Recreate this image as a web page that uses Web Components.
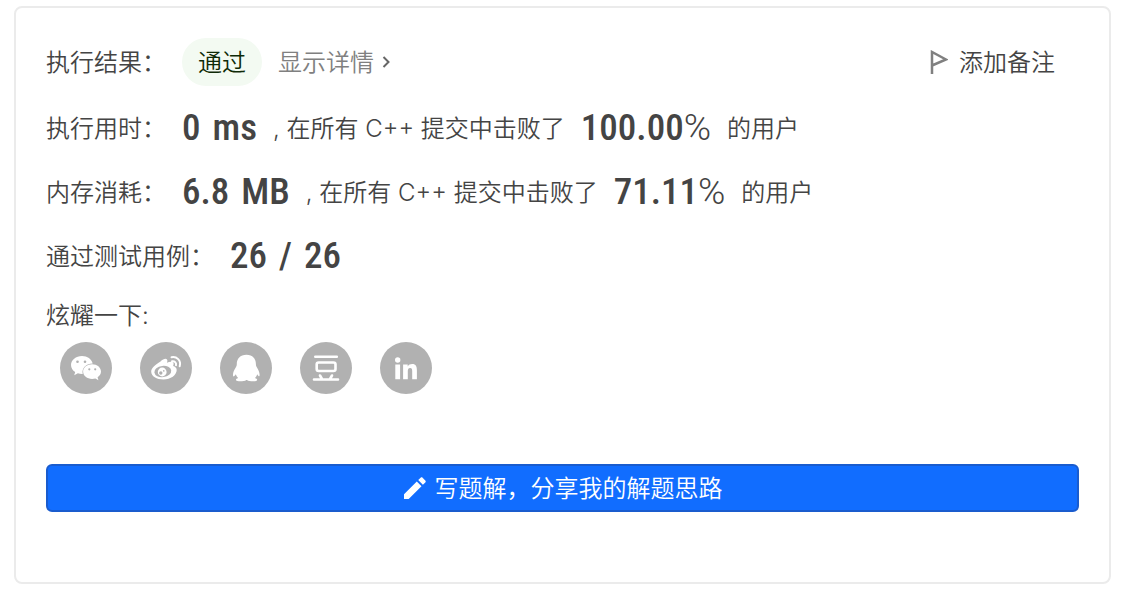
<!DOCTYPE html>
<html lang="zh-CN">
<head>
<meta charset="utf-8">
<meta name="viewport" content="width=device-width, initial-scale=1">
<title>执行结果</title>
<style>
  body {
    margin: 0;
    padding: 6px 13px 12px 14px;
    background: #fff;
    color: #444;
    font: 24px/32px Inter, "Noto Sans CJK SC", sans-serif;
    font-weight: 350;
  }
</style>
</head>
<body>
<submission-result></submission-result>

<template id="result-card">
  <style>
    :host { display: block; border: 2px solid #ebebeb; border-radius: 8px; padding: 24px 30px 70px; background: #fff; }
    .rows { display: flex; flex-direction: column; }
    footer { margin-top: 70px; }
    .first { min-height: 60px; padding-bottom: 4px; }
    .pass { padding: 9px 16px 7px; border-radius: 24px; background: #f3faf2; color: #0f2a06; }
    a { color: #808080; text-decoration: none; display: inline-flex; align-items: center; gap: 8px; }
    a span, .note span { padding-top: 2px; }
    .note { margin-left: auto; margin-right: 24px; padding: 0; border: 0; background: none; font: inherit; color: inherit; display: flex; align-items: center; gap: 11px; cursor: pointer; }
    .share { line-height: 28px; margin-top: 14px; }
    nav { display: flex; gap: 28px; padding: 12px 14px 0; }
  </style>
  <div class="rows">
    <result-row class="first" label="执行结果："><span class="pass">通过</span><a href="#detail"><span>显示详情</span><svg width="9" height="14" viewBox="0 0 9 14" fill="none" stroke="#666" stroke-width="2"><path d="M1.500 2l5 5-5 5"/></svg></a><button class="note" type="button"><svg width="18" height="24" viewBox="0 0 18 24" fill="none" stroke="#808080" stroke-width="2.500"><path d="M2 24V2L16 9.500 2 15.500"/></svg><span>添加备注</span></button></result-row>
    <result-row label="执行用时："><big-value><b>0</b> <b>ms</b></big-value><span>, 在所有 C++ 提交中击败了</span><big-value unit="%">100.00</big-value><span>的用户</span></result-row>
    <result-row label="内存消耗："><big-value><b>6.8</b> <b>MB</b></big-value><span>, 在所有 C++ 提交中击败了</span><big-value unit="%">71.11</big-value><span>的用户</span></result-row>
    <result-row label="通过测试用例："><big-value><b>26</b> <b>/</b> <b>26</b></big-value></result-row>
  </div>
  <div class="share">炫耀一下:</div>
  <nav aria-label="分享">
    <share-link label="微信"><svg viewBox="0 0 52 52"><path fill="#fff" d="M22 14c-6.100 0-11 4-11 9 0 2.900 1.600 5.400 4.200 7l-1 3.300 3.700-2c1.300.5 2.700.7 4.100.7h.7c-1.200-6 3.800-10.500 10-10.400C31.800 17 27.200 14 22 14z"/><path fill="#fff" d="M41 29.600c0-4.100-3.900-7.300-8.900-7.300s-9 3.200-9 7.300 4 7.400 9 7.400c1.200 0 2.300-.2 3.300-.5l3 1.700-.8-2.900c2.100-1.300 3.400-3.400 3.400-5.700z"/><g fill="#b1b1b1"><circle cx="17.500" cy="19.700" r="1.300"/><circle cx="25" cy="19.700" r="1.300"/><circle cx="29.300" cy="27.300" r="1.100"/><circle cx="35.200" cy="27.300" r="1.100"/></g></svg></share-link>
    <share-link label="微博"><svg viewBox="0 0 52 52"><path fill="#fff" d="M20.500 19.500c2.500-2.500 5.500-3.500 6.500-2 .7 1 .4 2-.1 3.200 2.700-1 6.600-1.600 6.700 1 0 .8-.3 1.500-.5 2.200 2 .6 3.600 1.800 3.600 4.100 0 5-6 9.500-13.300 9.500-6.700 0-12.200-3.200-12.200-8 0-3.200 4-7 9.300-10z"/><ellipse cx="22.800" cy="29.500" rx="8.500" ry="5.600" transform="rotate(-7 22.800 29.500)" fill="#b1b1b1"/><circle cx="22.200" cy="30" r="4.400" fill="#fff"/><circle cx="20.800" cy="31" r="1.700" fill="#b1b1b1"/><circle cx="23.800" cy="28.900" r=".8" fill="#b1b1b1"/><path fill="none" stroke="#fff" stroke-width="2" stroke-linecap="round" d="M31.500 15.200c5-1.200 10 3.400 8.200 9M32 19.300c2.500-.5 4.600 1.400 4 4"/></svg></share-link>
    <share-link label="QQ"><svg viewBox="0 0 52 52"><path fill="#fff" d="M26.500 12.800c-6.400 0-9.700 4.200-9.700 9.200 0 1.600-.4 2.300-1.200 3.700-1.500 2.500-2.600 4.700-2.600 7 0 2.200.9 2.500 2.800-.4.400 1.500 1.200 2.700 2.300 3.700-1.700.6-2.500 1.400-2 2.300.9 1.500 8 1.400 10.200-.4h.7c2.200 1.800 9.100 1.900 10 .4.500-.9-.2-1.700-2-2.300 1.100-1 1.900-2.200 2.300-3.700 1.500 2.600 2.300 2.600 2.300.4 0-2.300-1.100-4.500-2.500-7-.8-1.400-1.200-2.100-1.200-3.700 0-5-3.200-9.200-9.400-9.200z"/></svg></share-link>
    <share-link label="豆瓣"><svg viewBox="0 0 52 52"><g fill="none" stroke="#fff" stroke-width="2.600" stroke-linecap="round"><path d="M15.300 14.700h21.500M14 37.500h24M20 33.500l2 3.500M32 33.500l-2 3.500"/><rect x="16.700" y="20.500" width="18.800" height="8.500" rx="2"/></g></svg></share-link>
    <share-link label="领英"><svg viewBox="0 0 52 52"><g fill="#fff"><circle cx="17.700" cy="18" r="2.700"/><path d="M15.300 22.500h4.800v14.700h-4.800zM23.100 22.500h4.600v2c1-1.600 2.600-2.400 4.500-2.400 3.800 0 4.700 2.500 4.700 6.300v8.800h-4.700v-8c0-2-.2-3.300-2.100-3.300s-2.300 1.500-2.300 3.300v8h-4.700z"/></g></svg></share-link>
  </nav>
  <footer><write-button>写题解，分享我的解题思路</write-button></footer>
</template>

<template id="result-row">
  <style>
    :host { display: flex; align-items: center; min-height: 64px; gap: 16px; }
    .label, ::slotted(span) { padding-top: 2px; white-space: nowrap; }
  </style>
  <span class="label"></span><slot></slot>
</template>

<template id="big-value">
  <style>
    :host { display: flex; align-items: baseline; gap: 12px; font: 500 37px/40px "Roboto Condensed", Roboto, sans-serif; white-space: nowrap; }
    :host([unit]) { gap: 0; }
    ::slotted(b) { font-weight: inherit; }
    .unit { font-family: Roboto, sans-serif; font-weight: 300; }
    .unit:empty { display: none; }
  </style>
  <slot></slot><span class="unit"></span>
</template>

<template id="share-link">
  <style>
    :host { display: block; }
    a { display: block; width: 52px; height: 52px; border-radius: 50%; background: #b1b1b1; }
  </style>
  <a href="#share"><slot></slot></a>
</template>

<template id="write-button">
  <style>
    :host { display: block; }
    button { box-sizing: border-box; width: 100%; height: 48px; display: flex; align-items: center; justify-content: center; gap: 8px; border: 2px solid #1a5cce; border-radius: 6px; background: #116dff; color: #fff; font: inherit; cursor: pointer; padding: 0; }
    span { padding-top: 2px; }
  </style>
  <button type="button"><svg width="24" height="24" viewBox="0 0 24 24" fill="#fff"><path d="M1 18.300V23h4.700L18.500 10.200l-4.700-4.700zM22.300 6.400c.6-.6.600-1.400 0-2l-2.700-2.700c-.6-.6-1.400-.6-2 0l-2.400 2.400 4.700 4.700z"/></svg><span><slot></slot></span></button>
</template>

<script>
  class TemplateElement extends HTMLElement {
    constructor() {
      super();
      this.attachShadow({ mode: "open" })
        .append(document.getElementById(this.localName === "submission-result" ? "result-card" : this.localName).content.cloneNode(true));
    }
  }
  customElements.define("result-row", class extends TemplateElement {
    connectedCallback() { this.shadowRoot.querySelector(".label").textContent = this.getAttribute("label"); }
  });
  customElements.define("big-value", class extends TemplateElement {
    connectedCallback() { this.shadowRoot.querySelector(".unit").textContent = this.getAttribute("unit") || ""; }
  });
  customElements.define("share-link", class extends TemplateElement {
    connectedCallback() { this.shadowRoot.querySelector("a").setAttribute("aria-label", this.getAttribute("label")); }
  });
  customElements.define("write-button", class extends TemplateElement {});
  customElements.define("submission-result", class extends TemplateElement {});
</script>
</body>
</html>
